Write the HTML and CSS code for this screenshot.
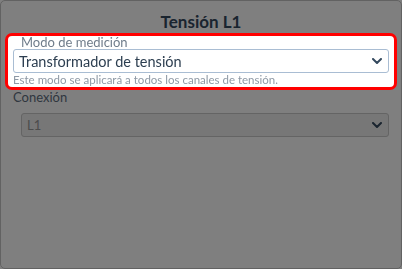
FILE: index.html
```html
<!DOCTYPE html>
<html lang="es">
<head>
<meta charset="utf-8">
<title>Tensión L1</title>
<link rel="stylesheet" href="styles.css">
</head>
<body>
<div class="card">
  <h1 class="title">Tensión L1</h1>
  <div class="group highlight">
    <label class="label label-float">Modo de medición</label>
    <div class="select">
      <span class="select-text">Transformador de tensión</span>
      <svg class="chev" width="10" height="6" viewBox="0 0 10 6"><path d="M1 1 L5 5 L9 1" fill="none" stroke="currentColor" stroke-width="2" stroke-linecap="round" stroke-linejoin="round"/></svg>
    </div>
    <p class="help">Este modo se aplicará a todos los canales de tensión.</p>
  </div>
  <div class="group group-conexion">
    <label class="label">Conexión</label>
    <div class="select select-disabled">
      <span class="select-text">L1</span>
      <svg class="chev" width="10" height="6" viewBox="0 0 10 6"><path d="M1 1 L5 5 L9 1" fill="none" stroke="currentColor" stroke-width="2" stroke-linecap="round" stroke-linejoin="round"/></svg>
    </div>
  </div>
</div>
<div class="overlay"></div>
</body>
</html>
```

FILE: styles.css
```css
* { box-sizing: border-box; }
html, body { margin: 0; padding: 0; height: 100%; }
body {
  background: #ffffff;
  font-family: Lato, "Noto Sans", sans-serif;
  color: #34495e;
}
.card {
  height: 269px;
  border: 1px solid #c4c4c4;
  border-radius: 5px;
  background: #ffffff;
  padding: 11px 12px 0 12px;
}
.title {
  margin: 0;
  font-size: 17px;
  line-height: 20px;
  font-weight: 700;
  text-align: center;
  color: #34495e;
}
.group { display: flex; flex-direction: column; }
.highlight {
  position: relative;
  z-index: 2;
  margin: 1px -8px 0 -8px;
  padding: 0 5px 1px 5px;
  background: #ffffff;
  border: 3px solid #ff0000;
  border-radius: 7px;
}
.label {
  font-size: 13px;
  line-height: 13px;
  color: #5e6e7e;
}
.label-float {
  padding-left: 8px;
  color: #6f7c8a;
}
.select {
  display: flex;
  align-items: center;
  justify-content: space-between;
  height: 24px;
  padding: 0 6px 0 5px;
  border: 1px solid #a9bdd3;
  border-radius: 3px;
  background: #ffffff;
  font-size: 14.5px;
  color: #2c3e50;
}
.chev { color: #34495e; }
.help {
  margin: 0;
  font-size: 11.5px;
  line-height: 13px;
  color: #8e99a5;
}
.group-conexion { margin-top: 1px; }
.select-disabled {
  margin-left: 8px;
  margin-top: 9px;
  background: #eeeeee;
  border-color: #c8c8c8;
  color: #999999;
  font-size: 13px;
}
.overlay {
  position: fixed;
  inset: 0;
  z-index: 1;
  background: rgba(0, 0, 0, 0.5);
}
```
